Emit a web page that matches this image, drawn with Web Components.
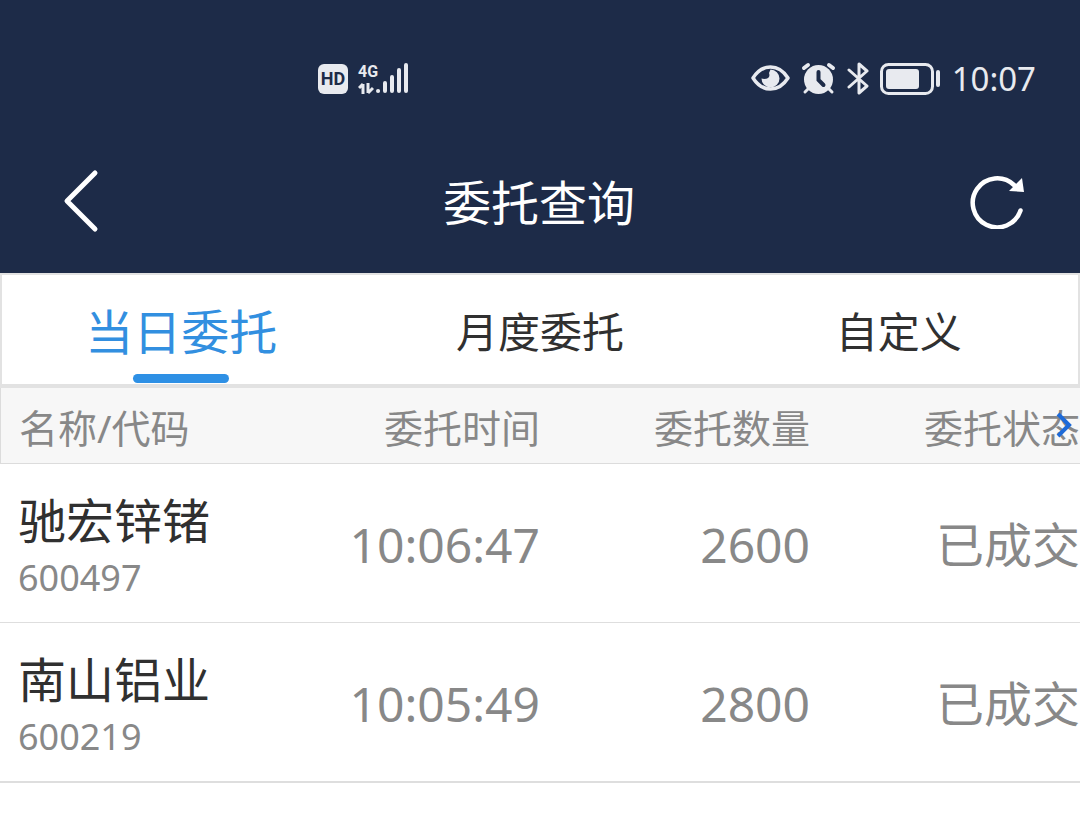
<!DOCTYPE html>
<html lang="zh-CN">
<head>
<meta charset="utf-8">
<meta name="viewport" content="width=device-width, initial-scale=1">
<title>委托查询</title>
<style>
  body { margin: 0; background: #fff; font-family: "Noto Sans", "Noto Sans CJK SC", sans-serif; }
</style>
</head>
<body>
<order-page></order-page>

<script>
function define(name, markup) {
  const template = document.createElement('template');
  template.innerHTML = markup;
  customElements.define(name, class extends HTMLElement {
    constructor() {
      super();
      this.attachShadow({ mode: 'open' }).append(template.content.cloneNode(true));
    }
  });
}

define('status-bar', `
<style>
  :host { display: flex; justify-content: space-between; align-items: center; height: 132px; padding: 26px 44px 0 318px; box-sizing: border-box; color: #e8eaef; }
  .group { display: flex; align-items: center; }
  .signal { gap: 10px; }
  svg { display: block; }
  .hd { width: 30px; height: 30px; border-radius: 6px; background: #e8eaef; color: #1d2b48; font: 700 18px/30px "Roboto", sans-serif; text-align: center; }
  .net { display: grid; grid-template-columns: 18px 33px; align-items: end; }
  .gen { font: 700 16px/16px "Roboto", sans-serif; }
  .bars { grid-row: 1 / 3; grid-column: 2; }
  .icons { gap: 11px; }
  time { font-size: 33px; line-height: 40px; }
</style>
<div class="group signal">
  <span class="hd">HD</span>
  <span class="net">
    <span class="gen">4G</span>
    <svg width="16" height="14" viewBox="0 0 16 14" fill="none" stroke="currentColor" stroke-width="3"><path d="M5 13V3M1 7L5 3M10 2V12M10 12L15 7"/></svg>
    <svg class="bars" width="33" height="32" viewBox="0 0 33 32" fill="none" stroke="currentColor" stroke-width="4" stroke-linecap="round"><path d="M2 28h.1M9 28V20M16 28V14M23 28V7M30 28V2" /></svg>
  </span>
</div>
<div class="group icons">
  <svg width="39" height="28" viewBox="0 0 39 28"><path d="M2 13Q9 2 19.500 2T37 13Q30 24 19.500 24T2 13Z" fill="none" stroke="currentColor" stroke-width="3.500" stroke-linejoin="round"/><path d="M19.500 4.500A9 9 0 1 1 10.500 13.500L13 14Q20 14 18 8Z" fill="currentColor"/></svg>
  <svg width="35" height="34" viewBox="0 0 35 34" fill="none" stroke="currentColor" stroke-width="4" stroke-linecap="round"><circle cx="17.500" cy="17.500" r="14.500" fill="currentColor" stroke="none"/><path d="M3 6l4-3M32 6l-4-3"/><path d="M7 27l-3 3M28 27l3 3" stroke-width="3"/><path d="M17.500 10v8l5 5" stroke="#1d2b48" stroke-width="4"/></svg>
  <svg width="22" height="34" viewBox="0 0 22 34" fill="none" stroke="currentColor" stroke-width="3" stroke-linecap="round" stroke-linejoin="round"><path d="M2 8L20 24L12 31V2L20 9L2 25"/></svg>
  <svg width="61" height="32" viewBox="0 0 61 32"><rect x="1.500" y="1.500" width="51" height="29" rx="7" fill="none" stroke="currentColor" stroke-width="3"/><rect x="6" y="6" width="33" height="20" rx="3" fill="currentColor"/><path d="M58 9V22" stroke="currentColor" stroke-width="4" stroke-linecap="round"/></svg>
  <time>10:07</time>
</div>
`);

define('nav-bar', `
<style>
  :host { display: flex; justify-content: space-between; align-items: center; height: 141px; padding: 0 53px 4px 51px; box-sizing: border-box; color: #fff; }
  button { display: grid; place-items: center; width: 60px; height: 72px; padding: 0; border: 0; background: none; color: inherit; }
  svg { display: block; }
  h1 { margin: 0; padding-top: 4px; font-size: 48px; line-height: 70px; font-weight: 400; }
</style>
<button type="button" aria-label="返回"><svg width="36" height="64" viewBox="0 0 36 64" fill="none" stroke="currentColor" stroke-width="5" stroke-linecap="round" stroke-linejoin="round"><path d="M32 4L4 32L32 60"/></svg></button>
<h1><slot></slot></h1>
<button type="button" aria-label="刷新"><svg width="56" height="56" viewBox="0 0 56 56"><path d="M51.500 37.500A24.500 24.500 0 1 1 45 12" fill="none" stroke="currentColor" stroke-width="4.500" stroke-linecap="round"/><path d="M53 5L55 19L40 18Z" fill="currentColor"/></svg></button>
`);

define('tab-item', `
<style>
  :host { flex: 1; display: flex; }
  button { position: relative; flex: 1; padding: 4px 0 0; border: 0; background: none; color: #303030; font: inherit; font-size: 42px; line-height: 60px; }
  :host([selected]) button { color: #328fe0; font-size: 48px; }
  :host([selected]) button::after { content: ""; position: absolute; left: 50%; bottom: 1px; width: 96px; height: 9px; margin-left: -48px; border-radius: 5px; background: #2e90e5; }
</style>
<button type="button"><slot></slot></button>
`);

define('tab-bar', `
<style>
  :host { display: flex; height: 115px; box-sizing: border-box; border: 2px solid #e2e2e2; border-bottom-width: 4px; background: #fff; }
</style>
<slot></slot>
`);

define('order-table', `
<style>
  :host { display: block; position: relative; overflow: hidden; }
  table { width: 100%; table-layout: fixed; border-collapse: separate; border-spacing: 0; color: #888; }
  th, td { box-sizing: border-box; padding: 4px 0 0; text-align: right; font-weight: 400; white-space: nowrap; }
  th { height: 76px; background: #f7f7f7; border-bottom: 1px solid #dcdcdc; font-size: 39px; line-height: 56px; }
  td { height: 159px; border-bottom: 1px solid #dedede; font-size: 48px; line-height: 70px; }
  tbody tr:last-child td { height: 160px; border-bottom-width: 2px; }
  th:first-child, td:first-child { padding-left: 18px; text-align: left; }
  th:first-child { border-left: 1px solid #dcdcdc; }
  .name, .code { display: block; }
  .name { color: #303030; line-height: 66px; }
  .code { font-size: 36px; line-height: 48px; }
  .more { position: absolute; top: 22px; right: 5px; padding: 0; border: 0; background: none; color: #1d6ad8; }
  svg { display: block; }
</style>
<table>
  <thead><tr><th scope="col">名称/代码</th><th scope="col">委托时间</th><th scope="col">委托数量</th><th scope="col">委托状态</th></tr></thead>
  <tbody>
    <tr><td><span class="name">驰宏锌锗</span><span class="code">600497</span></td><td>10:06:47</td><td>2600</td><td>已成交</td></tr>
    <tr><td><span class="name">南山铝业</span><span class="code">600219</span></td><td>10:05:49</td><td>2800</td><td>已成交</td></tr>
  </tbody>
</table>
<button class="more" type="button" aria-label="更多列"><svg width="20" height="30" viewBox="0 0 20 30" fill="none" stroke="currentColor" stroke-width="4"><path d="M3 4L14 15L3 26"/></svg></button>
`);

define('order-page', `
<style>
  :host { display: block; }
  header { background: #1d2b48; }
</style>
<header>
  <status-bar></status-bar>
  <nav-bar>委托查询</nav-bar>
</header>
<tab-bar>
  <tab-item selected>当日委托</tab-item>
  <tab-item>月度委托</tab-item>
  <tab-item>自定义</tab-item>
</tab-bar>
<order-table></order-table>
`);
</script>
</body>
</html>
